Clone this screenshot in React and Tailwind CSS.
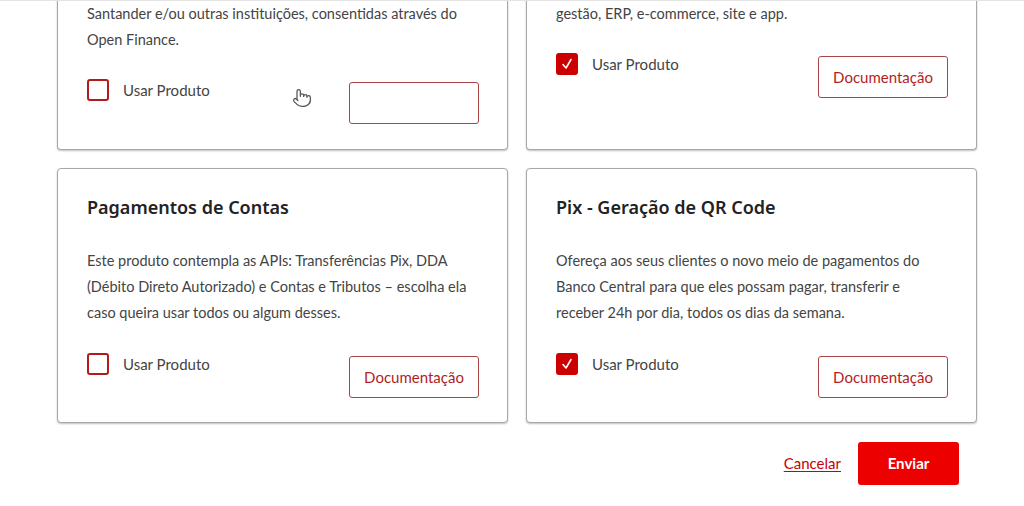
import React, { useState } from "react";
import { Pointer } from "lucide-react";

// top row is scrolled past its title: only the visible lines are kept
const products = [
    {
        text: "Santander e/ou outras instituições, consentidas através do Open Finance.",
        checked: false,
        hoverButton: true,
        clipped: true,
    },
    {
        text: "gestão, ERP, e-commerce, site e app.",
        checked: true,
        clipped: true,
    },
    {
        title: "Pagamentos de Contas",
        text: "Este produto contempla as APIs: Transferências Pix, DDA (Débito Direto Autorizado) e Contas e Tributos – escolha ela caso queira usar todos ou algum desses.",
        checked: false,
    },
    {
        title: "Pix - Geração de QR Code",
        text: "Ofereça aos seus clientes o novo meio de pagamentos do Banco Central para que eles possam pagar, transferir e receber 24h por dia, todos os dias da semana.",
        checked: true,
    },
];

const Checkbox = ({ checked, onChange }) => (
    <button
        onClick={onChange}
        className={`w-[22px] h-[22px] rounded-[3px] border-2 flex items-center justify-center ${checked ? "bg-[#cc0000] border-[#cc0000]" : "bg-white border-[#b31b1b]"}`}
    >
        {checked && (
            <svg width="14" height="14" viewBox="0 0 14 14" fill="none">
                <path d="M3 7.5 L6 11 L11 2.5" stroke="white" strokeWidth="1.6" strokeLinecap="round" strokeLinejoin="round" />
            </svg>
        )}
    </button>
);

const ProductCard = ({ product }) => {
    const [checked, setChecked] = useState(product.checked);
    const clipped = product.clipped;
    return (
        <div
            className={`bg-white border border-[#a8a8a8] shadow-[0_1px_2px_rgba(0,0,0,0.25)] pl-[29px] pr-[28px] ${clipped ? "border-t-0 rounded-b-[4px] pt-[1px] pb-[25px]" : "rounded-[4px] pt-[26px] pb-[24px]"}`}
        >
            {!clipped && (
                <h3 className="mb-[29px] text-[18px] leading-[24px] font-semibold text-[#222] font-['Noto_Sans',sans-serif]">{product.title}</h3>
            )}
            <p className="text-[14.5px] leading-[26px] text-[#444]">{product.text}</p>
            <div className={`${clipped ? "mt-[26px]" : "mt-[27px]"} flex justify-between items-start`}>
                <label className="flex items-center gap-[14px] cursor-pointer">
                    <Checkbox checked={checked} onChange={() => setChecked(!checked)} />
                    <span className="text-[15px] text-[#444]">Usar Produto</span>
                </label>
                <button className="mt-[3px] w-[130px] h-[42px] border border-[#a94444] rounded-[3px] text-[15px] text-[#b21e1e] bg-white">
                    {product.hoverButton ? "" : "Documentação"}
                </button>
            </div>
        </div>
    );
};

const App = () => {
    return (
        <div className="relative h-[506px] overflow-hidden bg-white font-['Lato',sans-serif]">
            <div className="absolute top-0 left-0 right-0 h-px bg-[#e4e4e4] z-10" />
            <div className="ml-[57px] w-[920px]">
                <div className="grid grid-cols-2 gap-[18px]">
                    {products.map((p, i) => (
                        <ProductCard key={i} product={p} />
                    ))}
                </div>
                <div className="mt-[19px] pr-[18px] flex justify-end items-center gap-[17px]">
                    <a href="#" className="text-[15px] text-[#cc0000] underline underline-offset-2">Cancelar</a>
                    <button className="w-[101px] h-[43px] bg-[#ec0000] rounded-[3px] text-white text-[15px] font-bold">Enviar</button>
                </div>
            </div>
            <Pointer className="absolute left-[292px] top-[88px] w-[20px] h-[20px] text-[#555] fill-white z-20" strokeWidth={1.5} />
        </div>
    );
};

export default App;
